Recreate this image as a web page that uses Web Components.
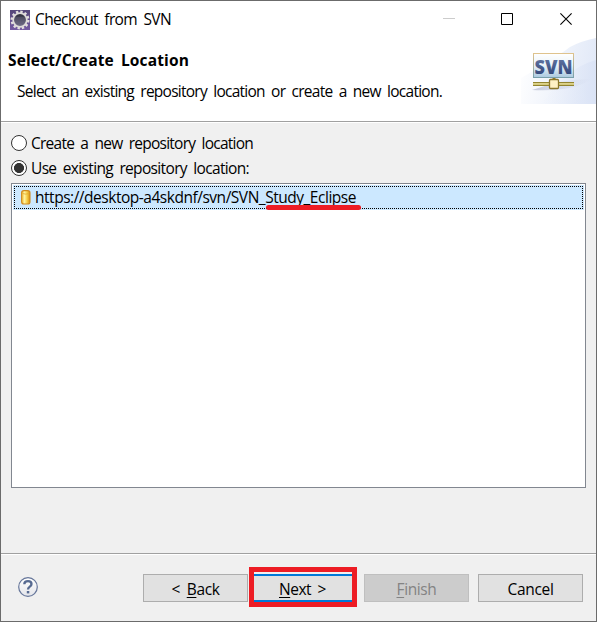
<!DOCTYPE html>
<html lang="en"><head><meta charset="utf-8"><title>Checkout from SVN</title>
<style>html,body{margin:0;height:100%;overflow:hidden}body{font:15.5px/20px "Open Sans","Noto Sans",sans-serif;color:#000}</style></head>
<body>
<wizard-window></wizard-window>
<script>
const define = (name, html, after) => {
  const t = document.createElement('template');
  t.innerHTML = html;
  customElements.define(name, class extends HTMLElement {
    constructor() { super(); this.attachShadow({mode: 'open'}).append(t.content.cloneNode(true)); }
    connectedCallback() { if (after) after(this, this.shadowRoot); }
  });
};

/* One line of text, tracked so that it fills the width given in "w". */
define('fit-text', `<style>:host{display:inline-block;white-space:pre;flex:none}span{display:inline-block;word-spacing:3px}</style><span><slot></slot></span>`,
  (el, root) => {
    const s = root.querySelector('span'), w = +el.getAttribute('w');
    const gap = (w - s.getBoundingClientRect().width) / el.textContent.length;
    s.style.letterSpacing = gap + 'px';
    el.style.width = w + 'px';
  });

define('title-bar', `<style>
:host{display:flex;align-items:center;height:37px;background:#fff;padding-left:9px}
svg{display:block;flex:none}.gear{margin-right:5px}fit-text{margin-top:-1px}.ctl{margin-left:auto;margin-right:24px}</style>
<svg class="gear" width="20" height="20" viewBox="0 0 20 20">
<defs><linearGradient id="g" x2="0" y2="1"><stop stop-color="#554779"/><stop offset="1" stop-color="#755aa2"/></linearGradient><linearGradient id="k" x2="0" y2="1"><stop stop-color="#292936"/><stop offset="1" stop-color="#77738f"/></linearGradient></defs>
<rect width="20" height="20" fill="url(#g)"/>
<circle cx="10" cy="10" r="8.3" fill="none" stroke="#e3e0df" stroke-width="2.4" stroke-dasharray="2.35 2"/>
<circle cx="10" cy="10" r="6.8" fill="url(#k)" stroke="#dedbd9" stroke-width="1.8"/><path d="M5 8h10M4.8 10h10.4M5 12h10" stroke="#716d86" stroke-width=".6"/></svg>
<fit-text w="136">Checkout from SVN</fit-text>
<svg class="ctl" width="129" height="13" viewBox="0 0 129 13" fill="none"><path d="M0 5.5h12" stroke="#ccc"/><path d="M58.5.5h11v11h-11z" stroke="#000"/><path d="M117.4.4l11.2 11.2M128.6.4l-11.2 11.2" stroke="#000" stroke-width="1.1"/></svg>`);

define('svn-banner', `<style>:host{display:block;width:75px;height:67px}svg{display:block}</style>
<svg width="75" height="66" viewBox="0 0 75 66">
<defs><linearGradient id="b" x2="1" y2=".15"><stop stop-color="#fff"/><stop offset="1" stop-color="#e3eaf8"/></linearGradient>
<linearGradient id="c" x2="1" y2="0"><stop stop-color="#e6ecf9" stop-opacity="0"/><stop offset="1" stop-color="#d5dff4"/></linearGradient>
<linearGradient id="s" x2="0" y2="1"><stop stop-color="#fff"/><stop offset=".5" stop-color="#eaf3fa"/><stop offset="1" stop-color="#abc9df"/></linearGradient>
<linearGradient id="e" x2="0" y2="1"><stop stop-color="#dfc38d"/><stop offset="1" stop-color="#789fab"/></linearGradient>
<linearGradient id="t" x2="0" y2="1"><stop stop-color="#7184ae"/><stop offset="1" stop-color="#263a70"/></linearGradient>
<linearGradient id="h" x2="1" y2="0"><stop stop-color="#aeb4ca" stop-opacity=".7"/><stop offset="1" stop-color="#c4cce2" stop-opacity="0"/></linearGradient></defs>
<path d="M0 67V40Q32 22 49 9 60 3 75 0v67z" fill="url(#b)"/>
<path d="M20 67Q43 31 75 22v45z" fill="url(#c)" opacity=".6"/>
<path d="M11 52Q45 40 71 41 58 49 42 51 27 53 11 52z" fill="url(#h)"/>
<rect x="12.5" y="15.5" width="40" height="24" fill="url(#s)" stroke="url(#e)"/>
<text x="13.5" y="35.5" textLength="38" lengthAdjust="spacingAndGlyphs" font-family="Open Sans,sans-serif" font-weight="800" font-size="19.5" fill="url(#t)">SVN</text>
<path d="M33 40v4" stroke="#8c7a29" stroke-width="3"/>
<rect x="12" y="44" width="41" height="4" fill="#938530"/><rect x="12" y="45.2" width="41" height="1.5" fill="#eee5a0"/>
<rect x="28.5" y="41.5" width="9" height="9" rx="1" fill="#fff0c4" stroke="#8c762b" stroke-width="1.3"/></svg>`);

define('page-header', `<style>
:host{display:flex;justify-content:space-between;height:83px;background:#fff;border-bottom:1px solid #a0a0a0;box-shadow:0 1px #fff;position:relative}
.t{display:flex;flex-direction:column;padding:12px 0 0 7px}b{height:20px}.d{padding:11px 0 0 9px}</style>
<div class="t"><b><fit-text w="181">Select/Create Location</fit-text></b><div class="d"><fit-text w="425">Select an existing repository location or create a new location.</fit-text></div></div><svn-banner></svn-banner>`);

define('radio-option', `<style>
:host{display:flex;align-items:flex-start;box-sizing:border-box;height:25px;padding-top:2px}i{box-sizing:border-box;width:16px;height:16px;border:1px solid #333;border-radius:50%;background:#fff;margin:2px 4px 0 0}
:host([checked]) i{background:radial-gradient(circle,#333 0 4.7px,#fff 5.3px)}</style><i></i><slot></slot>`);

define('location-list', `<style>
:host{display:block;box-sizing:border-box;height:305px;border:1px solid #828790;background:#fff;padding:1px}
.r{box-sizing:border-box;height:25px;background:#cce8ff;padding:1px;}
.f{box-sizing:border-box;height:23px;display:flex;align-items:center;padding-left:7px;position:relative;
background:repeating-linear-gradient(90deg,#000 0 1px,transparent 1px 2px) 0 0/100% 1px no-repeat,repeating-linear-gradient(90deg,#000 0 1px,transparent 1px 2px) 0 100%/100% 1px no-repeat,repeating-linear-gradient(#000 0 1px,transparent 1px 2px) 0 0/1px 100% no-repeat,repeating-linear-gradient(#000 0 1px,transparent 1px 2px) 100% 0/1px 100% no-repeat}
svg{margin-right:4px}.m{position:absolute;left:252px;top:19px;width:95px;height:5px;border-radius:2.5px;background:#ed1c24}fit-text{margin-top:-1px}</style>
<div class="r"><div class="f"><svg width="10" height="15" viewBox="0 0 10 15"><defs><linearGradient id="y"><stop stop-color="#efb62b"/><stop offset=".35" stop-color="#fff3a2"/><stop offset=".65" stop-color="#f7cf48"/><stop offset="1" stop-color="#d58c13"/></linearGradient></defs><rect x=".6" y=".6" width="8.4" height="13.4" rx="2.3" fill="url(#y)" stroke="#d08b21" stroke-width="1.1"/><path d="M1.5 3.5q3.3 1.3 6.6 0" stroke="#e1a930" fill="none" stroke-width=".8"/></svg>
<fit-text w="321">https://desktop-a4skdnf/svn/SVN_Study_Eclipse</fit-text><span class="m"></span></div></div>`);

define('push-button', `<style>
:host{display:flex;align-items:center;justify-content:center;box-sizing:border-box;width:105px;height:28px;border:1px solid #adadad;background:#e1e1e1;padding-top:1px}
:host([primary]){border:2px solid #0078d7;position:relative}
:host([disabled]){background:#ccc;border-color:#bfbfbf;color:#838383}
.mark{display:none}:host([primary]) .mark{display:block;position:absolute;box-sizing:border-box;left:-3px;top:-9px;width:108px;height:40px;border:5px solid #ed1c24}</style><slot></slot><span class="mark"></span>`);

define('button-bar', `<style>
:host{display:flex;height:68px;box-sizing:border-box;border-top:1px solid #a0a0a0;box-shadow:inset 0 1px #fff;padding:20px 13px 0 16px}
svg{display:block;margin:3px auto 0 1px}.g{display:flex}.g>:nth-child(2){margin-left:2px;margin-right:9px}.g>:nth-child(3){margin-right:9px}u{text-decoration-thickness:1px;text-underline-offset:2px}</style>
<svg width="20" height="20" viewBox="0 0 20 20"><defs><linearGradient id="q" x2="0" y2="1"><stop stop-color="#fff"/><stop offset="1" stop-color="#e4e5ea"/></linearGradient></defs><circle cx="10" cy="10" r="9.3" fill="url(#q)" stroke="#66769a" stroke-width="1.2"/><path d="M6.3 7.2Q6.4 4.2 10 4.2q3.5 0 3.5 2.8 0 1.4-1.7 2.6Q10 10.8 10 12.4" fill="none" stroke="#576a91" stroke-width="2.3"/><rect x="8.8" y="14" width="2.5" height="2.4" fill="#576a91"/></svg>
<div class="g"><push-button><fit-text w="48">&lt; <u>B</u>ack</fit-text></push-button><push-button primary><fit-text w="47"><u>N</u>ext &gt;</fit-text></push-button><push-button disabled><fit-text w="40"><u>F</u>inish</fit-text></push-button><push-button><fit-text w="46">Cancel</fit-text></push-button></div>`);

define('wizard-window', `<style>
:host{display:flex;flex-direction:column;box-sizing:border-box;width:597px;height:622px;border:1px solid #6b6b6b;background:#f0f0f0}
main{flex:1;padding:9px 10px 0}location-list{margin-top:2px}</style>
<title-bar></title-bar><page-header></page-header>
<main><radio-option><fit-text w="222">Create a new repository location</fit-text></radio-option><radio-option checked><fit-text w="218">Use existing repository location:</fit-text></radio-option><location-list></location-list></main>
<button-bar></button-bar>`);
</script>
</body></html>
